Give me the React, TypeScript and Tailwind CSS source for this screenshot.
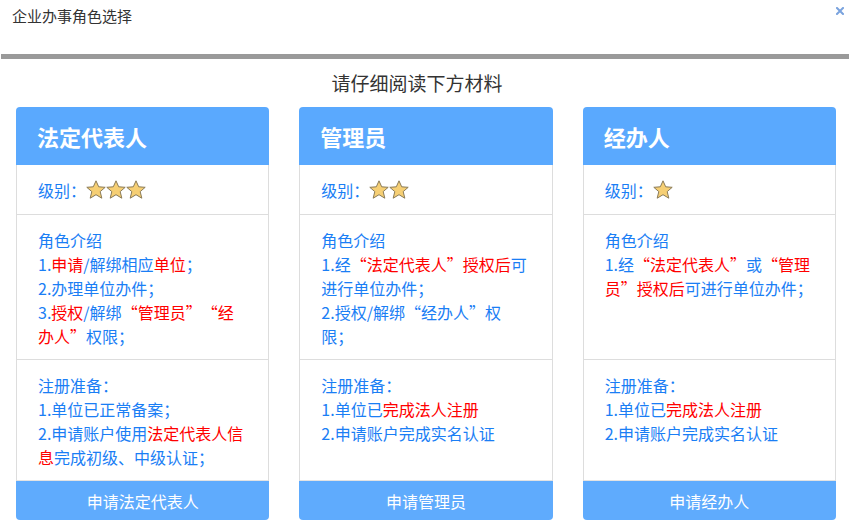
import React from 'react'

type Seg = { t: string; red?: boolean }

// line breaks follow the original layout ("\n")
const roles: {
  title: string
  stars: number
  intro: Seg[][]
  reg: Seg[][]
  button: string
}[] = [
  {
    title: '法定代表人',
    stars: 3,
    intro: [
      [{ t: '1.' }, { t: '申请', red: true }, { t: '/解绑相应' }, { t: '单位', red: true }, { t: '；' }],
      [{ t: '2.办理单位办件；' }],
      [{ t: '3.' }, { t: '授权', red: true }, { t: '/解绑' }, { t: '“管理员”“经\n办人”', red: true }, { t: '权限；' }],
    ],
    reg: [
      [{ t: '1.单位已正常备案；' }],
      [{ t: '2.申请账户使用' }, { t: '法定代表人信\n息', red: true }, { t: '完成初级、中级认证；' }],
    ],
    button: '申请法定代表人',
  },
  {
    title: '管理员',
    stars: 2,
    intro: [
      [{ t: '1.经' }, { t: '“法定代表人”授权后', red: true }, { t: '可\n进行单位办件；' }],
      [{ t: '2.授权/解绑“经办人”权\n限；' }],
    ],
    reg: [
      [{ t: '1.单位已' }, { t: '完成法人注册', red: true }],
      [{ t: '2.申请账户完成实名认证' }],
    ],
    button: '申请管理员',
  },
  {
    title: '经办人',
    stars: 1,
    intro: [
      [
        { t: '1.经' },
        { t: '“法定代表人”', red: true },
        { t: '或' },
        { t: '“管理\n员”授权后', red: true },
        { t: '可进行单位办件；' },
      ],
    ],
    reg: [
      [{ t: '1.单位已' }, { t: '完成法人注册', red: true }],
      [{ t: '2.申请账户完成实名认证' }],
    ],
    button: '申请经办人',
  },
]

const Star = () => (
  <svg width="20" height="20" viewBox="0 0 20 20">
    <polygon
      points="10,0.8 12.7,6.8 19.2,7.3 14.2,11.6 15.8,18.2 10,14.7 4.2,18.2 5.8,11.6 0.8,7.3 7.3,6.8"
      fill="#f6cf74"
      stroke="#8a7b58"
      strokeWidth="1"
      strokeLinejoin="round"
    />
  </svg>
)

const Line = ({ segs }: { segs: Seg[] }) => (
  <p className="whitespace-pre-line">
    {segs.map((s, i) => (
      <span key={i} className={s.red ? 'text-[#ff0000]' : ''}>
        {s.t}
      </span>
    ))}
  </p>
)

export default function App() {
  return (
    <div className="w-[850px] h-[530px] bg-white relative overflow-hidden font-['Noto_Sans_CJK_SC',sans-serif] [text-spacing-trim:space-all]">
      {/* Dialog title */}
      <div className="h-[54px] pl-[12px] pt-[5px] text-[15px] leading-[22px] text-[#333]">企业办事角色选择</div>
      <button className="absolute top-[7px] right-[6px] w-[8px] h-[8px]">
        <svg width="8" height="8" viewBox="0 0 8 8">
          <path d="M1 1L7 7M7 1L1 7" stroke="#7aa3de" strokeWidth="2" strokeLinecap="square" />
        </svg>
      </button>
      <div className="mx-[1px] h-[5px] bg-[#9a9a9a]" />

      <div className="mt-[10px] pr-[16px] text-center text-[19px] leading-[28px] text-[#333]">请仔细阅读下方材料</div>

      {/* Role cards */}
      <div className="mt-[10px] pl-[16px] pr-[14px] grid grid-cols-3 gap-[30px]">
        {roles.map((r) => (
          <div key={r.title} className="flex flex-col text-[16px] leading-[24px] text-[#1a7ef5]">
            <div className="h-[58px] rounded-t-[4px] bg-[#5aa9fe] pl-[21px] flex items-center text-[22px] font-bold text-white">
              {r.title}
            </div>
            <div className="border-x border-[#dddddd]">
              <div className="h-[50px] border-b border-[#dddddd] pl-[21px] flex items-center">
                <span>级别：</span>
                <span className="flex">
                  {Array.from({ length: r.stars }).map((_, i) => (
                    <Star key={i} />
                  ))}
                </span>
              </div>
              <div className="h-[145px] border-b border-[#dddddd] pl-[21px] pr-[12px] pt-[13px]">
                <p>角色介绍</p>
                {r.intro.map((l, i) => (
                  <Line key={i} segs={l} />
                ))}
              </div>
              <div className="h-[121px] border-b border-[#e3e3e3] pl-[21px] pr-[12px] pt-[13px]">
                <p>注册准备：</p>
                {r.reg.map((l, i) => (
                  <Line key={i} segs={l} />
                ))}
              </div>
            </div>
            <button className="h-[39px] rounded-b-[4px] bg-[#5fabfd] text-white text-[16px]">{r.button}</button>
          </div>
        ))}
      </div>
    </div>
  )
}
